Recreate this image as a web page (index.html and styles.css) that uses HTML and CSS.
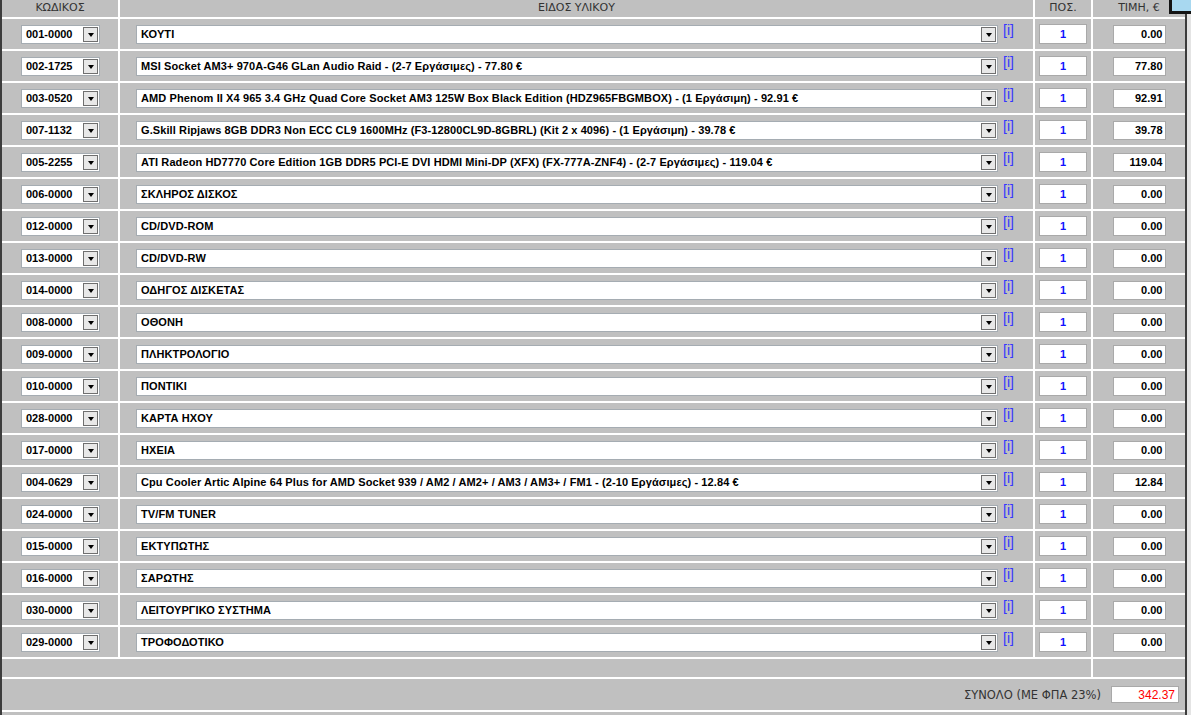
FILE: index.html
```html
<!DOCTYPE html>
<html lang="el">
<head>
    <meta charset="UTF-8">
    <meta name="viewport" content="width=device-width, initial-scale=1.0">
    <title>Συναρμολόγηση PC</title>
    <link rel="stylesheet" href="styles.css">
</head>
<body>
    <div class="sheet" id="sheet">
        <div class="cell head">ΚΩΔΙΚΟΣ</div>
        <div class="cell head">ΕΙΔΟΣ ΥΛΙΚΟΥ</div>
        <div class="cell head">ΠΟΣ.</div>
        <div class="cell head">ΤΙΜΗ, €</div>
    </div>
    <div class="corner"></div>
    <script>
        // γραμμές υλικών
        const items = [
            ["001-0000", "ΚΟΥΤΙ", "0.00"],
            ["002-1725", "MSI Socket AM3+ 970A-G46 GLan Audio Raid - (2-7 Εργάσιμες) - 77.80 €", "77.80"],
            ["003-0520", "AMD Phenom II X4 965 3.4 GHz Quad Core Socket AM3 125W Box Black Edition (HDZ965FBGMBOX) - (1 Εργάσιμη) - 92.91 €", "92.91"],
            ["007-1132", "G.Skill Ripjaws 8GB DDR3 Non ECC CL9 1600MHz (F3-12800CL9D-8GBRL) (Kit 2 x 4096) - (1 Εργάσιμη) - 39.78 €", "39.78"],
            ["005-2255", "ATI Radeon HD7770 Core Edition 1GB DDR5 PCI-E DVI HDMI Mini-DP (XFX) (FX-777A-ZNF4) - (2-7 Εργάσιμες) - 119.04 €", "119.04"],
            ["006-0000", "ΣΚΛΗΡΟΣ ΔΙΣΚΟΣ", "0.00"],
            ["012-0000", "CD/DVD-ROM", "0.00"],
            ["013-0000", "CD/DVD-RW", "0.00"],
            ["014-0000", "ΟΔΗΓΟΣ ΔΙΣΚΕΤΑΣ", "0.00"],
            ["008-0000", "ΟΘΟΝΗ", "0.00"],
            ["009-0000", "ΠΛΗΚΤΡΟΛΟΓΙΟ", "0.00"],
            ["010-0000", "ΠΟΝΤΙΚΙ", "0.00"],
            ["028-0000", "ΚΑΡΤΑ ΗΧΟΥ", "0.00"],
            ["017-0000", "ΗΧΕΙΑ", "0.00"],
            ["004-0629", "Cpu Cooler Artic Alpine 64 Plus for AMD Socket 939 / AM2 / AM2+ / AM3 / AM3+ / FM1 - (2-10 Εργάσιμες) - 12.84 €", "12.84"],
            ["024-0000", "TV/FM TUNER", "0.00"],
            ["015-0000", "ΕΚΤΥΠΩΤΗΣ", "0.00"],
            ["016-0000", "ΣΑΡΩΤΗΣ", "0.00"],
            ["030-0000", "ΛΕΙΤΟΥΡΓΙΚΟ ΣΥΣΤΗΜΑ", "0.00"],
            ["029-0000", "ΤΡΟΦΟΔΟΤΙΚΟ", "0.00"]
        ];

        const sheet = document.getElementById('sheet');
        let html = '';
        items.forEach(item => {
            html += `
                <div class="cell code">
                    <div class="dropdown code-select"><span class="value">${item[0]}</span><span class="arrow"></span></div>
                </div>
                <div class="cell item">
                    <div class="dropdown item-select"><span class="value">${item[1]}</span><span class="arrow"></span></div>
                    <a class="info">[i]</a>
                </div>
                <div class="cell qty"><div class="field qty-field">1</div></div>
                <div class="cell price"><div class="field price-field">${item[2]}</div></div>
            `;
        });
        html += `
            <div class="cell spacer wide3"></div>
            <div class="cell spacer"></div>
            <div class="cell total">
                <span>ΣΥΝΟΛΟ (ΜΕ ΦΠΑ 23%)</span>
                <div class="field total-field">342.37</div>
            </div>
            <div class="cell tail"></div>
        `;
        sheet.insertAdjacentHTML('beforeend', html);
    </script>
</body>
</html>
```

FILE: styles.css
```css
body {
    margin: 0;
    padding: 0;
    background-color: #e4e4e4;
    font-family: "Liberation Sans", Arial, sans-serif;
    height: 715px;
    overflow: hidden;
}
.sheet {
    width: 1183px;
    display: grid;
    grid-template-columns: 116px 913px 56px 92px;
    gap: 2px;
    background-color: #fff;
    border-left: 2px solid #3c3c3c;
    border-right: 2px solid #3c3c3c;
    height: 715px;
    align-content: start;
}
.cell {
    background-color: #c0c0c0;
    height: 30px;
    display: flex;
    align-items: center;
    box-sizing: border-box;
}
.cell.head {
    height: 17px;
    justify-content: center;
    align-items: flex-start;
    padding-top: 1px;
    font-family: "DejaVu Sans", Verdana, sans-serif;
    font-size: 11px;
    color: #333;
}
.code {
    padding-left: 19px;
}
.item {
    padding-left: 16px;
}
.qty, .price {
    justify-content: center;
}
.dropdown {
    display: flex;
    align-items: center;
    height: 19px;
    box-sizing: border-box;
    border: 1px solid #a5acb2;
    background-color: #fff;
    font-size: 11px;
    font-weight: bold;
    color: #000;
}
.dropdown .value {
    flex: 1;
    padding-left: 4px;
    white-space: nowrap;
    overflow: hidden;
}
.item-select .value {
    letter-spacing: 0.1px;
}
.dropdown .arrow {
    width: 15px;
    height: 15px;
    box-sizing: border-box;
    margin-right: 1px;
    border: 1px solid #6f6f6f;
    background-color: #e8e8e8;
    display: flex;
    align-items: center;
    justify-content: center;
}
.dropdown .arrow::after {
    content: "";
    margin-top: 2px;
    border-left: 3.5px solid transparent;
    border-right: 3.5px solid transparent;
    border-top: 4px solid #000;
}
.code-select {
    width: 79px;
}
.item-select {
    width: 862px;
}
.info {
    align-self: flex-start;
    margin-top: 3px;
    margin-left: 5px;
    font-size: 14px;
    color: #3535ff;
}
.field {
    height: 19px;
    box-sizing: border-box;
    border: 1px solid #a9a9a9;
    background-color: #fff;
    font-size: 11px;
    font-weight: bold;
    display: flex;
    align-items: center;
}
.qty-field {
    width: 48px;
    height: 20px;
    justify-content: center;
    color: #1010ff;
}
.price-field {
    width: 53px;
    justify-content: flex-end;
    padding-right: 2px;
    color: #000;
}
.spacer {
    height: 18px;
}
.wide3 {
    grid-column: span 3;
}
.total {
    grid-column: span 4;
    height: 31px;
    justify-content: flex-end;
    padding-right: 6px;
    font-family: "DejaVu Sans", Verdana, sans-serif;
    font-size: 11.5px;
    color: #333;
}
.total-field {
    width: 68px;
    height: 17px;
    margin-left: 10px;
    justify-content: flex-end;
    padding-right: 3px;
    font-family: "Liberation Sans", Arial, sans-serif;
    font-size: 12px;
    font-weight: normal;
    color: #ff0000;
}
.tail {
    grid-column: span 4;
    height: 10px;
}
.corner {
    position: absolute;
    top: 0;
    right: 0;
    width: 19px;
    height: 11px;
    background-color: #a8d8f0;
    border-left: 3px solid #141414;
    border-bottom: 3px solid #141414;
}
```
